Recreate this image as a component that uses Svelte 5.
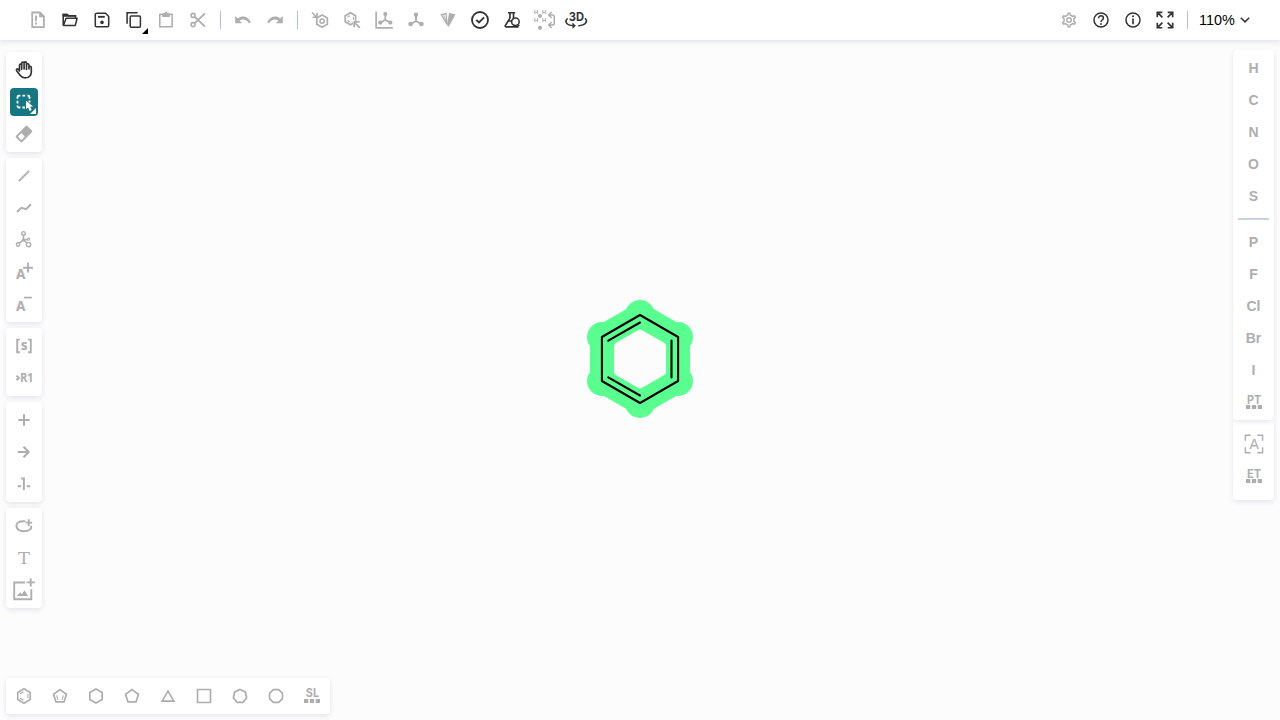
<script>
  const s = (d, w = 1.5, extra = '') => `<path d="${d}" fill="none" stroke="currentColor" stroke-width="${(w * 1.1).toFixed(2)}" ${extra}/>`;
  const f = (d) => `<path d="${d}" fill="currentColor"/>`;
  const c = (x, y, r, w = 1.4) => `<circle cx="${x}" cy="${y}" r="${r}" fill="none" stroke="currentColor" stroke-width="${w}"/>`;
  const dot = (x, y, r) => `<circle cx="${x}" cy="${y}" r="${r}" fill="currentColor"/>`;
  const t = (str, x, y, size, weight = 700, family = 'Liberation Sans', len = '', bold = 0) =>
    `<text x="${x}" y="${y}" font-size="${size}" font-weight="${weight}" font-family="${family}, sans-serif" text-anchor="middle" fill="currentColor" stroke="currentColor" stroke-width="${bold}" ${len ? `textLength="${len}" lengthAdjust="spacingAndGlyphs"` : ''}>${str}</text>`;
  const poly = (n, r, cy = 0, w = 1.7, rot = 0) => {
    const pts = Array.from({ length: n }, (_, i) => {
      const a = ((i + rot) * 2 * Math.PI) / n - Math.PI / 2;
      return `${(r * Math.cos(a)).toFixed(2)},${(cy + r * Math.sin(a)).toFixed(2)}`;
    });
    return `<polygon points="${pts.join(' ')}" fill="none" stroke="currentColor" stroke-width="${w}"/>`;
  };
  const dots3 = f('M-8 3.1h4.3v3.9h-4.3z M-2.15 3.1h4.3v3.9h-4.3z M3.7 3.1h4.3v3.9h-4.3z');
  const gear = Array.from({ length: 48 }, (_, i) => {
    const a = (i * Math.PI) / 24;
    const k = i % 8;
    const r = k === 0 || k === 1 || k === 7 ? 6.9 : 5;
    return `${(r * Math.sin(a)).toFixed(2)},${(-r * Math.cos(a)).toFixed(2)}`;
  }).join(' ');
  const tripod = dot(0, -5.3, 2.2) + dot(-5.4, 4, 2.3) + dot(5.4, 4, 2.3) + s('M0-5V1M-5 4L0 1L5 4', 1.7);

  const icons = {
    clear: s('M-5.8-7.5H2L5.9-3.7V7.2H-5.8Z', 1.6) + f('M1.2-8L6.4-2.8H1.2z') + s('M-2-4.5V1.2M-2 2.6V4.4', 1.7),
    open: s('M-6.8 5.3V-5.6H-2.8L-1.3-4.2H5.5V-2', 1.4) + f('M-7.5-6.2H-2.6L-1-4.8H6.2V-3.2H-7.5z') + s('M-3.9-1.7H7.1L5.3 5.4H-6.6Z', 1.4, 'stroke-linejoin="round"'),
    save: s('M-5.7-6.7H3.5L6.7-3.5V5.5Q6.7 6.7 5.5 6.7H-5.5Q-6.7 6.7-6.7 5.5V-5.5Q-6.7-6.7-5.5-6.7', 1.4) + s('M-4-3.2H2.8', 1.7) + dot(0, 2.4, 1.8),
    copy: s('M-6.9 3.7V-7.2H3.6', 1.4) + `<rect x="-3.8" y="-4" width="10.2" height="11.2" rx="1" fill="none" stroke="currentColor" stroke-width="1.5"/>`,
    paste: s('M-6.2-5.8H6.2V6.7H-6.2Z', 1.4, 'stroke-linejoin="round"') + f('M-3.8-6.8H-1.6Q0-10 1.6-6.8H3.8V-3H-3.8z'),
    cut: c(-4.9, -4.6, 2, 1.6) + c(-4.9, 4.6, 2, 1.6) + s('M-3.5-3.4L7 6.7M-3.5 3.4L7-6.7', 1.7),
    undo: f('M-7.8-3.9V3.2H-.8L-3.5.6C-.8-1.4 3.7-1.1 5.8 3.2L7.8 2.5C5.2-4-1-4.9-5.1-1.5z'),
    redo: f('M7.8-3.9V3.2H.8L3.5.6C.8-1.4-3.7-1.1-5.8 3.2L-7.8 2.5C-5.2-4 1-4.9 5.1-1.5z'),
    arom: `<g transform="translate(2.1 1.1)">${poly(6, 6.1)}${c(0, 0, 2.1, 1.5)}</g>` + s('M-8-7.5L-3.4-3M-2.9-7.2V-2.8H-7.4', 1.5),
    dearom: `<g transform="translate(-1.6 -1.2)">${poly(6, 6)}${s('M-3 1.7L-.5 3M3-2V1M-3-1.8L-.5-3', 1)}</g><path d="M1 .8H6L8 8H1z" fill="#fff"/>` + s('M7.9 7.9L3 3M2.2 7.3V1.9H7.6', 1.6),
    layout: s('M-7.9-8.6V7.9H8.8', 1.5) + `<g transform="translate(1.3 -1.1) scale(.93)">${tripod}</g>`,
    clean: tripod,
    cip: s('M-6.7-5.4L-1.9-6.5L-1 4.2Z', 1.2) + s('M-4.4-5.6L-1 4.4', .8) + f('M1.1-7.2L7.5-5.5L.5 7L-1 5z'),
    check: c(0, 0, 8, 1.8) + s('M-3.7-.2L-1 2.5L4.1-2.6', 1.7),
    analyse: s('M-4-7.3H3.2M-2-7V-1.9L-6.6 5.3Q-7.2 6.8-5.6 6.8H6.6M1.5-7V-2', 1.5) + s('M-4 1H0', 1.4) + c(3.4, 1.8, 3.8, 1.5) + s('M6.2 4.6L7 6.2', 1.4),
    hydro: [[-8, -6.1], [.2, -6.1], [-8, 2], [.2, 2]].map(([x, y]) => t('H', x, y, 5.8, 400, 'Liberation Sans', '', .25)).join('') + dot(-4, -3.9, 2) + dot(-4, 7.8, 2.1) + s('M5-5H8.4Q10.3-5 10.3-2.8V3Q10.3 5 8.4 5H5M7.6-8L4.7-5L7.6-2M7.6 2L4.7 5L7.6 8', 1.4),
    three: t('3D', .4, .6, 12, 700, 'Inter', 15.2) + s('M-8.4-1.5C-11.5 1-10.5 5.4-2.3 5.7M9-1.7C12.5 1.5 9.5 5.2 2.3 5.7', 1.4) + f('M-3.5 2.5L-.2 5.8L-3.5 8.8z'),
    settings: `<polygon points="${gear}" fill="none" stroke="currentColor" stroke-width="1.5" stroke-linejoin="round"/>` + c(0, 0, 2.3, 1.5),
    help: c(0, 0, 7, 1.5) + s('M-2.4-1.7C-2.4-5 2.4-4.9 2.4-1.8C2.4 0 0 0 0 2', 1.4) + dot(0, 4, .9),
    info: c(0, 0, 7, 1.5) + s('M0-1.5V4.2', 1.5) + dot(0, -3.7, 1),
    full: s('M-2.6-2.6L-7.3-7.3M-7.7-2.7V-7.7H-2.7M2.6-2.6L7.3-7.3M2.7-7.7H7.7V-2.7M-2.6 2.6L-7.3 7.3M-7.7 2.7V7.7H-2.7M2.6 2.6L7.3 7.3M2.7 7.7H7.7V2.7', 1.5),
    hand: s('M-4.3 1.2V-4.6Q-4.3-5.8-3.2-5.8Q-2.1-5.8-2.1-4.6V-.5V-6.6Q-2.1-7.8-.8-7.8Q.3-7.8.3-6.6V-.8V-6.8Q.4-8 1.6-8Q2.7-8 2.7-6.8V-.4V-5Q2.8-6.1 3.9-6.1Q5.2-6.1 5.2-4.9V-.8V-2.4Q5.3-3.5 6.4-3.5Q7.5-3.5 7.5-2.3V2.4Q7.2 7.7 1.9 8Q-1.6 8.2-3.5 5.7L-7.2 1Q-7.8-.1-6.8-.8Q-5.9-1.4-4.3 1.2Z', 1.5, 'stroke-linejoin="round" transform="translate(-.2 -.2)"'),
    select: s('M-6.5-3.3V-5Q-6.5-6.4-5-6.4H-3.6M-1.6-6.4H1.2M3.4-6.4H4Q5.5-6.4 5.5-5V-3.3M-6.5-1.2V1.6M-6.5 3.6V4Q-6.5 5.5-5 5.5H-3.6M-1.6 5.5H1M5.5-1.4V.6', 1.6) + f('M2-1.6V7L4.1 5.4L5.6 9L7.7 8.1L6.2 4.7L9 4.4z') + f('M12 6V12H6z'),
    erase: `<g transform="rotate(-45)"><rect x="-8" y="-4.4" width="16" height="8.8" rx="1.2" fill="currentColor"/><rect x="-6.3" y="-2.6" width="5.1" height="5.2" rx="1" fill="#fff"/></g>`,
    bond: s('M-5.2 5.2L5.2-5.2', 1.7),
    chain: s('M-7 4L-2.6-.1L2.1 1.1L7-3.7', 1.8),
    stereo: c(-.5, -6.6, 1.8) + c(-6, 4.5, 1.7) + c(4.5, 4.6, 2.2) + c(4.5, -.8, 1.1, 1.1) + s('M-.5-4.8V-1M-1.8 1L-4.6 3.3M.8 1L3 3M1-.1L3.6-.6', 1.3) + s('M-2 .9L-.5-1.8L1 .9Z', 1.3),
    plusA: t('A', -3.2, 7, 13.6, 700, 'Noto Sans') + s('M4-9.2V.6M-.9-4.2H8.9', 1.7),
    minusA: t('A', -3.2, 7, 13.6, 700, 'Noto Sans') + s('M0-6.4H7.8', 1.6),
    sgroup: s('M-4.1-6.4H-6.8V6.2H-4.1M4.1-6.4H6.8V6.2H4.1', 1.7) + t('s', .1, 3.9, 13.5, 700, 'Noto Sans', '', .15),
    rgroup: s('M-7.5-2.4L-5.1-.1L-7.5 2.2', 1.8) + t('R1', 2.8, 4, 12.3, 700, 'Noto Sans', 13, .1),
    plus: s('M0-5.7V5.7M-5.7 0H5.7', 1.8),
    arrow: s('M-6.3 0H4.6M-.5-5.2L4.7 0L-.5 5.2', 1.8),
    mapping: s('M-6.3 2.3H-2.8M2.8 2.3H6.3M-2.9-5.4H-.1V6', 1.8),
    shape: s('M1.1-4.7C-12-5.5-8.5 5.7-.5 5.2C5.8 5.2 8 2.4 6.9-.2', 1.7) + s('M4.8-6.7V-.1M1.5-3.4H8.1', 1.7),
    text: t('T', 0, 6, 16, 400, 'DejaVu Serif', 11.8),
    image: s('M1-7.5H-9.8V9.3H7.3V-.8', 1.7) + s('M6.7-11.8V-3.4M2.5-7.6H10.9', 1.7) + f('M-7 6L-3.8 2.3L-2.2 4.2L.4.3L4.2 6z'),
    benzene: poly(6, 7.2) + s('M-3.9 2.2L-.4 4.2M-3.9-2.2L-.4-4.2M3.9-2.2V2.2', 1),
    cyclopd: poly(5, 6.8, .4) + s('M-3.3-.6L-2.2 3.9M3.3-.6L2.2 3.9', 1),
    hexane: poly(6, 7.1),
    pentane: poly(5, 6.8, .4),
    tri: s('M0-4.9L5.9 5.1H-5.9Z', 1.5),
    square: s('M-6.5-6.5H6.5V6.5H-6.5Z', 1.5),
    hept: poly(7, 6.8, .2),
    oct: poly(8, 7, 0, 1.7, .5),
    SL: t('SL', .4, 1.2, 11.3, 700, 'Inter', 13.2) + dots3,
    PT: t('PT', 0, 1.6, 11.3, 700, 'Inter', 14.2) + dots3,
    ET: t('ET', 0, 1.6, 11.3, 700, 'Inter', 14.2) + dots3,
    any: s('M-3.3-8.7H-8.6V-3.3M3.3-8.7H8.6V-3.3M-3.3 8.7H-8.6V3.3M3.3 8.7H8.6V3.3', 1.3) + t('A', .2, 5, 14, 400, 'Liberation Sans', '', .1),
  };
  const dark = new Set(['open', 'save', 'copy', 'check', 'analyse', 'three', 'help', 'info', 'full', 'hand']);
  const topGroups = [
    ['clear', 'open', 'save', 'copy', 'paste', 'cut'],
    ['undo', 'redo'],
    ['arom', 'dearom', 'layout', 'clean', 'cip', 'check', 'analyse', 'hydro', 'three'],
  ];
  const leftGroups = [
    ['hand', 'select', 'erase'],
    ['bond', 'chain', 'stereo', 'plusA', 'minusA'],
    ['sgroup', 'rgroup'],
    ['plus', 'arrow', 'mapping'],
    ['shape', 'text', 'image'],
  ];
  const rings = ['benzene', 'cyclopd', 'hexane', 'pentane', 'tri', 'square', 'hept', 'oct', 'SL'];
</script>

{#snippet tool(name)}
  <button class="tool" class:dark={dark.has(name)} class:active={name === 'select'} aria-label={name}>
    <svg viewBox="-14 -14 28 28">{@html icons[name]}</svg>
    {#if name === 'copy'}<span class="corner"></span>{/if}
  </button>
{/snippet}

<div class="app">
  <header>
    {#each topGroups as group, i}
      {#if i}<span class="sep"></span>{/if}
      <div class="group">{#each group as name}{@render tool(name)}{/each}</div>
    {/each}
    <div class="spacer"></div>
    <div class="group">{#each ['settings', 'help', 'info', 'full'] as name}{@render tool(name)}{/each}</div>
    <span class="sep"></span>
    <button class="zoom"><span>110%</span><svg width="10" height="6" viewBox="0 0 10 6"><path d="M.8.7L5 4.9L9.2.7" fill="none" stroke="#333" stroke-width="1.5" /></svg></button>
  </header>
  <div class="body">
    <aside class="left">
      {#each leftGroups as group}
        <div class="panel">{#each group as name}{@render tool(name)}{/each}</div>
      {/each}
    </aside>
    <main>
      <svg class="molecule" width="120" height="124" viewBox="-60 -62 120 124">
        <g fill="#59ff8f">
          <path d="M0-44L38-22V22L0 44L-38 22V-22Z" stroke="#59ff8f" stroke-width="24" />
          {#each [[0, -44], [38, -22], [38, 22], [0, 44], [-38, 22], [-38, -22]] as [x, y]}
            <circle cx={x} cy={y} r="15" />
          {/each}
        </g>
        <path d="M0-25.4L22-12.7V12.7L0 25.4L-22 12.7V-12.7Z" fill="#fcfcfc" stroke="#fcfcfc" stroke-width="8" stroke-linejoin="round" />
        <g fill="none" stroke="#000" stroke-width="2.1" stroke-linecap="round" stroke-linejoin="round">
          <path d="M0-44L38.1-22V22L0 44L-38.1 22V-22Z" />
          <path d="M-31.7-18.3L0-36.5M31.5-18.5V18.5M-31.7 18.3L0 36.5" />
        </g>
      </svg>
    </main>
    <aside class="right">
      <div class="elements">
        {#each ['H', 'C', 'N', 'O', 'S'] as el}<button class="tool el">{el}</button>{/each}
        <span class="line"></span>
        {#each ['P', 'F', 'Cl', 'Br', 'I'] as el}<button class="tool el">{el}</button>{/each}
        {@render tool('PT')}
      </div>
      <div class="elements extra">{@render tool('any')}{@render tool('ET')}</div>
    </aside>
  </div>
  <footer><div class="panel row">{#each rings as name}{@render tool(name)}{/each}</div></footer>
</div>

<style>
  :global(body) { margin: 0; }
  .app { width: 1280px; height: 720px; box-sizing: border-box; display: flex; flex-direction: column; background: #fcfcfc; overflow: hidden; font-family: 'Liberation Sans', Arial, sans-serif; }
  button { border: 0; background: none; padding: 0; font-family: inherit; }
  header { height: 40px; flex: none; box-sizing: border-box; padding: 0 30px 0 24px; display: flex; align-items: center; background: #fff; box-shadow: 0 2px 5px rgba(103, 104, 132, .17); }
  .group { display: flex; gap: 4px; }
  .spacer { flex: 1; }
  .sep { width: 1px; height: 18px; margin: 0 8px; background: #b5bbd7; }
  .tool { position: relative; width: 28px; height: 28px; flex: none; border-radius: 4px; color: #aeaeae; display: flex; align-items: center; justify-content: center; }
  .tool svg { width: 28px; height: 28px; display: block; overflow: visible; }
  .tool.dark { color: #333; }
  .tool.active { background: #167782; color: #fff; }
  .corner { position: absolute; right: 0; bottom: 0; width: 6px; height: 6px; background: #000; clip-path: polygon(100% 0, 100% 100%, 0 100%); }
  .zoom { width: 54px; padding-left: 3px; box-sizing: border-box; display: flex; align-items: center; gap: 3px; color: #000; font-size: 14.4px; line-height: 20px; }
  .zoom span { width: 38px; white-space: nowrap; text-align: left; }
  .zoom svg { flex: none; }
  .body { flex: 1; display: flex; justify-content: space-between; min-height: 0; padding: 0 6px; }
  .left { padding-top: 12px; display: flex; flex-direction: column; gap: 6px; }
  .panel { padding: 4px; display: flex; flex-direction: column; gap: 4px; background: #fff; border-radius: 4px; box-shadow: 0 2px 5px rgba(103, 104, 132, .15); }
  .panel.row { flex-direction: row; gap: 8px; }
  main { flex: 1; display: flex; justify-content: center; align-items: flex-start; padding: 257px 0 0 5px; }
  .molecule { flex: none; }
  .right { width: 41px; padding-top: 10px; }
  .elements { padding: 4px 0; display: flex; flex-direction: column; align-items: center; gap: 4px; background: #fff; border-radius: 4px; box-shadow: 0 2px 5px rgba(103, 104, 132, .15); }
  .extra { padding: 10px 0; border-radius: 0 0 4px 4px; }
  .elements:first-child { position: relative; }
  .el { font-size: 14px; font-weight: 700; }
  .line { width: 31px; height: 2px; background: #cad3dd; margin: 4px 0; }
  footer { height: 42px; padding: 0 6px; display: flex; align-items: flex-start; }
</style>
